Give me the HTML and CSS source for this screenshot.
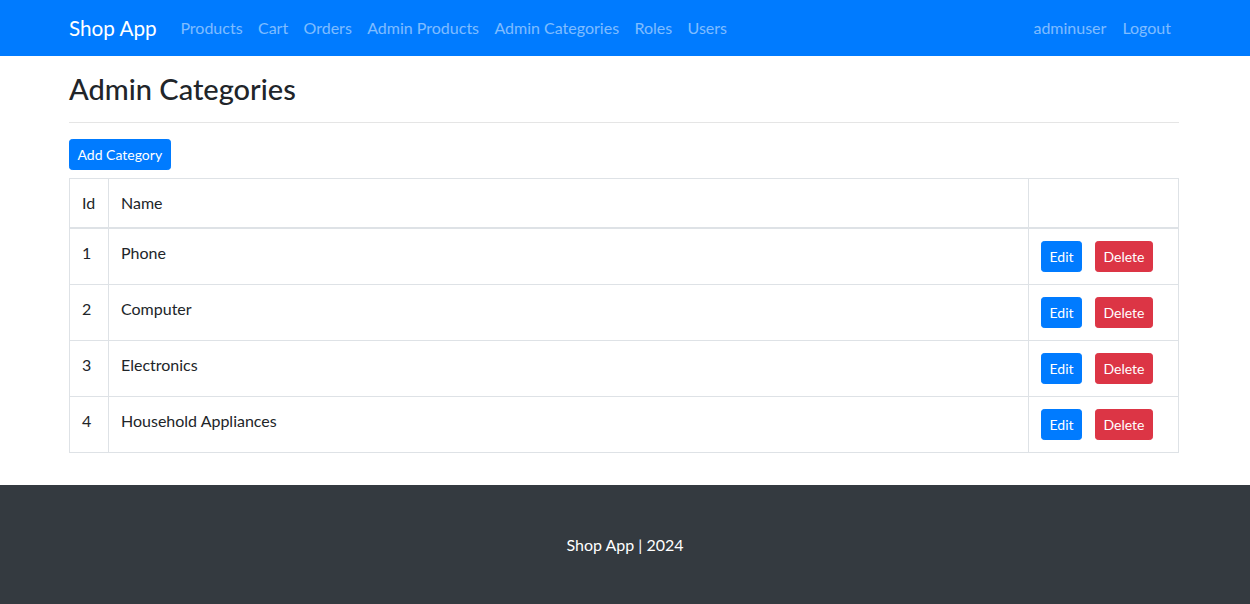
FILE: index.html
```html
<!DOCTYPE html>
<html lang="en">
<head>
<meta charset="utf-8">
<title>Admin Categories - Shop App</title>
<link rel="stylesheet" href="styles.css">
</head>
<body>
<nav class="navbar">
  <div class="navbar-inner">
    <a class="brand" href="#">Shop App</a>
    <ul class="nav nav-main">
      <li><a href="#">Products</a></li>
      <li><a href="#">Cart</a></li>
      <li><a href="#">Orders</a></li>
      <li><a href="#">Admin Products</a></li>
      <li><a href="#">Admin Categories</a></li>
      <li><a href="#">Roles</a></li>
      <li><a href="#">Users</a></li>
    </ul>
    <ul class="nav nav-user">
      <li><a href="#">adminuser</a></li>
      <li><a href="#">Logout</a></li>
    </ul>
  </div>
</nav>

<main class="container">
  <h3 class="page-title">Admin Categories</h3>
  <hr class="divider">
  <a class="btn btn-primary" href="#">Add Category</a>
  <table class="table">
    <thead>
      <tr><th class="col-id">Id</th><th>Name</th><th class="col-actions"></th></tr>
    </thead>
    <tbody>
      <tr><td>1</td><td>Phone</td><td><div class="actions"><a class="btn btn-primary" href="#">Edit</a><a class="btn btn-danger" href="#">Delete</a></div></td></tr>
      <tr><td>2</td><td>Computer</td><td><div class="actions"><a class="btn btn-primary" href="#">Edit</a><a class="btn btn-danger" href="#">Delete</a></div></td></tr>
      <tr><td>3</td><td>Electronics</td><td><div class="actions"><a class="btn btn-primary" href="#">Edit</a><a class="btn btn-danger" href="#">Delete</a></div></td></tr>
      <tr><td>4</td><td>Household Appliances</td><td><div class="actions"><a class="btn btn-primary" href="#">Edit</a><a class="btn btn-danger" href="#">Delete</a></div></td></tr>
    </tbody>
  </table>
</main>

<footer class="footer">
  <p>Shop App | 2024</p>
</footer>
</body>
</html>
```
FILE: styles.css
```css
* { box-sizing: border-box; }
html, body { margin: 0; padding: 0; }
body {
  font-family: "Lato", "Liberation Sans", sans-serif;
  font-size: 16px;
  line-height: 1.5;
  color: #212529;
  background: #fff;
}
a { text-decoration: none; }

.navbar {
  background: #007bff;
  height: 56px;
}
.navbar-inner {
  max-width: 1140px;
  margin: 0 auto;
  padding: 0 16px 0 14px;
  height: 56px;
  display: flex;
  align-items: center;
}
.brand {
  color: #fff;
  font-size: 20.7px;
  line-height: 30px;
  padding: 5px 0;
  margin-right: 16px;
  white-space: nowrap;
}
.nav {
  list-style: none;
  margin: 0;
  padding: 0;
  display: flex;
}
.nav a {
  display: block;
  padding: 8px 8px;
  line-height: 24px;
  color: rgba(255, 255, 255, 0.5);
  white-space: nowrap;
}
.nav-main a { padding: 8px 7.7px; }
.nav-user { margin-left: auto; }

.container {
  max-width: 1140px;
  margin: 16px auto 0;
  padding: 0 16px 32px 14px;
}
.page-title {
  font-size: 29px;
  font-weight: 500;
  line-height: 33.6px;
  margin: 0;
  color: #212529;
}
.divider {
  border: 0;
  border-top: 1px solid rgba(0, 0, 0, 0.1);
  margin: 16px 0;
}

.btn {
  display: inline-block;
  font-size: 14px;
  line-height: 21px;
  padding: 4px 7.5px;
  border: 1px solid transparent;
  border-radius: 3.2px;
  color: #fff;
  white-space: nowrap;
  vertical-align: top;
}
.btn-primary { background: #007bff; border-color: #007bff; }
.btn-danger { background: #dc3545; border-color: #dc3545; }

.table {
  width: 100%;
  margin-top: 8px;
  border-collapse: collapse;
  border: 1px solid #dee2e6;
}
.table th, .table td {
  border: 1px solid #dee2e6;
  padding: 12px;
  vertical-align: top;
  text-align: left;
  font-weight: 400;
}
.table thead th {
  border-bottom: 2px solid #dee2e6;
  vertical-align: bottom;
}
.col-id { width: 39px; }
.col-actions { width: 150px; }
.actions {
  display: flex;
  gap: 13px;
}

.footer {
  background: #343a40;
  color: #fff;
  text-align: center;
  padding: 48px 0;
}
.footer p { margin: 0; }
```
